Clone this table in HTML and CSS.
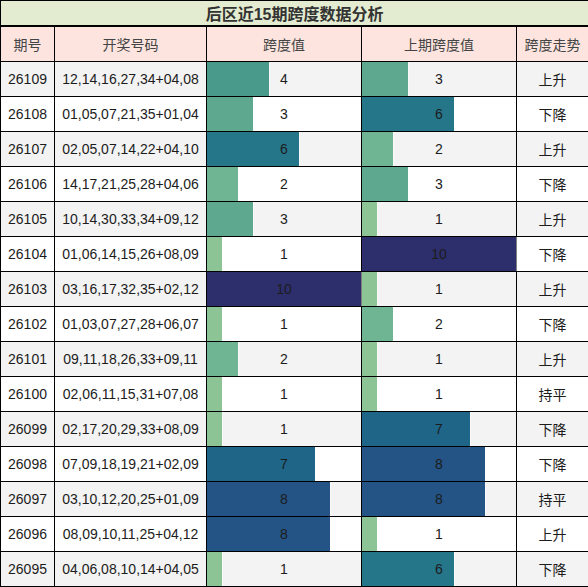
FILE: index.html
```html
<!DOCTYPE html>
<html lang="zh">
<head>
  <meta charset="utf-8" />
  <title>后区近15期跨度数据分析</title>
  <link rel="stylesheet" href="styles.css">
</head>
<body>
<table class="kd-table">
  <colgroup>
    <col class="kd-col--qh" />
    <col class="kd-col--hm" />
    <col class="kd-col--kd" />
    <col class="kd-col--kd" />
    <col class="kd-col--zs" />
  </colgroup>
  <tr class="kd-title"><td colspan="5">后区近15期跨度数据分析</td></tr>
  <tr class="kd-head">
    <td>期号</td><td>开奖号码</td><td>跨度值</td><td>上期跨度值</td><td>跨度走势</td>
  </tr>
  <tr class="kd-row">
    <td>26109</td><td>12,14,16,27,34+04,08</td>
    <td class="kd-cell"><div class="kd-meter"><div class="kd-bar kd-bar--4" style="width:40%"></div><span class="kd-num">4</span></div></td>
    <td class="kd-cell"><div class="kd-meter"><div class="kd-bar kd-bar--3" style="width:30%"></div><span class="kd-num">3</span></div></td>
    <td>上升</td>
  </tr>
  <tr class="kd-row">
    <td>26108</td><td>01,05,07,21,35+01,04</td>
    <td class="kd-cell"><div class="kd-meter"><div class="kd-bar kd-bar--3" style="width:30%"></div><span class="kd-num">3</span></div></td>
    <td class="kd-cell"><div class="kd-meter"><div class="kd-bar kd-bar--6" style="width:60%"></div><span class="kd-num">6</span></div></td>
    <td>下降</td>
  </tr>
  <tr class="kd-row">
    <td>26107</td><td>02,05,07,14,22+04,10</td>
    <td class="kd-cell"><div class="kd-meter"><div class="kd-bar kd-bar--6" style="width:60%"></div><span class="kd-num">6</span></div></td>
    <td class="kd-cell"><div class="kd-meter"><div class="kd-bar kd-bar--2" style="width:20%"></div><span class="kd-num">2</span></div></td>
    <td>上升</td>
  </tr>
  <tr class="kd-row">
    <td>26106</td><td>14,17,21,25,28+04,06</td>
    <td class="kd-cell"><div class="kd-meter"><div class="kd-bar kd-bar--2" style="width:20%"></div><span class="kd-num">2</span></div></td>
    <td class="kd-cell"><div class="kd-meter"><div class="kd-bar kd-bar--3" style="width:30%"></div><span class="kd-num">3</span></div></td>
    <td>下降</td>
  </tr>
  <tr class="kd-row">
    <td>26105</td><td>10,14,30,33,34+09,12</td>
    <td class="kd-cell"><div class="kd-meter"><div class="kd-bar kd-bar--3" style="width:30%"></div><span class="kd-num">3</span></div></td>
    <td class="kd-cell"><div class="kd-meter"><div class="kd-bar kd-bar--1" style="width:10%"></div><span class="kd-num">1</span></div></td>
    <td>上升</td>
  </tr>
  <tr class="kd-row">
    <td>26104</td><td>01,06,14,15,26+08,09</td>
    <td class="kd-cell"><div class="kd-meter"><div class="kd-bar kd-bar--1" style="width:10%"></div><span class="kd-num">1</span></div></td>
    <td class="kd-cell"><div class="kd-meter"><div class="kd-bar kd-bar--10" style="width:100%"></div><span class="kd-num">10</span></div></td>
    <td>下降</td>
  </tr>
  <tr class="kd-row">
    <td>26103</td><td>03,16,17,32,35+02,12</td>
    <td class="kd-cell"><div class="kd-meter"><div class="kd-bar kd-bar--10" style="width:100%"></div><span class="kd-num">10</span></div></td>
    <td class="kd-cell"><div class="kd-meter"><div class="kd-bar kd-bar--1" style="width:10%"></div><span class="kd-num">1</span></div></td>
    <td>上升</td>
  </tr>
  <tr class="kd-row">
    <td>26102</td><td>01,03,07,27,28+06,07</td>
    <td class="kd-cell"><div class="kd-meter"><div class="kd-bar kd-bar--1" style="width:10%"></div><span class="kd-num">1</span></div></td>
    <td class="kd-cell"><div class="kd-meter"><div class="kd-bar kd-bar--2" style="width:20%"></div><span class="kd-num">2</span></div></td>
    <td>下降</td>
  </tr>
  <tr class="kd-row">
    <td>26101</td><td>09,11,18,26,33+09,11</td>
    <td class="kd-cell"><div class="kd-meter"><div class="kd-bar kd-bar--2" style="width:20%"></div><span class="kd-num">2</span></div></td>
    <td class="kd-cell"><div class="kd-meter"><div class="kd-bar kd-bar--1" style="width:10%"></div><span class="kd-num">1</span></div></td>
    <td>上升</td>
  </tr>
  <tr class="kd-row">
    <td>26100</td><td>02,06,11,15,31+07,08</td>
    <td class="kd-cell"><div class="kd-meter"><div class="kd-bar kd-bar--1" style="width:10%"></div><span class="kd-num">1</span></div></td>
    <td class="kd-cell"><div class="kd-meter"><div class="kd-bar kd-bar--1" style="width:10%"></div><span class="kd-num">1</span></div></td>
    <td>持平</td>
  </tr>
  <tr class="kd-row">
    <td>26099</td><td>02,17,20,29,33+08,09</td>
    <td class="kd-cell"><div class="kd-meter"><div class="kd-bar kd-bar--1" style="width:10%"></div><span class="kd-num">1</span></div></td>
    <td class="kd-cell"><div class="kd-meter"><div class="kd-bar kd-bar--7" style="width:70%"></div><span class="kd-num">7</span></div></td>
    <td>下降</td>
  </tr>
  <tr class="kd-row">
    <td>26098</td><td>07,09,18,19,21+02,09</td>
    <td class="kd-cell"><div class="kd-meter"><div class="kd-bar kd-bar--7" style="width:70%"></div><span class="kd-num">7</span></div></td>
    <td class="kd-cell"><div class="kd-meter"><div class="kd-bar kd-bar--8" style="width:80%"></div><span class="kd-num">8</span></div></td>
    <td>下降</td>
  </tr>
  <tr class="kd-row">
    <td>26097</td><td>03,10,12,20,25+01,09</td>
    <td class="kd-cell"><div class="kd-meter"><div class="kd-bar kd-bar--8" style="width:80%"></div><span class="kd-num">8</span></div></td>
    <td class="kd-cell"><div class="kd-meter"><div class="kd-bar kd-bar--8" style="width:80%"></div><span class="kd-num">8</span></div></td>
    <td>持平</td>
  </tr>
  <tr class="kd-row">
    <td>26096</td><td>08,09,10,11,25+04,12</td>
    <td class="kd-cell"><div class="kd-meter"><div class="kd-bar kd-bar--8" style="width:80%"></div><span class="kd-num">8</span></div></td>
    <td class="kd-cell"><div class="kd-meter"><div class="kd-bar kd-bar--1" style="width:10%"></div><span class="kd-num">1</span></div></td>
    <td>上升</td>
  </tr>
  <tr class="kd-row">
    <td>26095</td><td>04,06,08,10,14+04,05</td>
    <td class="kd-cell"><div class="kd-meter"><div class="kd-bar kd-bar--1" style="width:10%"></div><span class="kd-num">1</span></div></td>
    <td class="kd-cell"><div class="kd-meter"><div class="kd-bar kd-bar--6" style="width:60%"></div><span class="kd-num">6</span></div></td>
    <td>下降</td>
  </tr>
</table>
</body>
</html>
```

FILE: styles.css
```css
:root {
  --line: #000;
  --title-bg: #e3ecd0;
  --head-bg: #fde4df;
  --odd: #f3f3f3;
  --even: #fff;
  --ink: #1c1c1c;
}
html, body {
  margin: 0;
  padding: 0;
  background: #fff;
}
.kd-table {
  width: 588px;
  table-layout: fixed;
  border-collapse: collapse;
  font-family: "Liberation Sans", "Noto Sans CJK SC", sans-serif;
  font-size: 14px;
  color: var(--ink);
  text-align: center;
}
.kd-col--qh { width: 54px; }
.kd-col--hm { width: 152px; }
.kd-col--kd { width: 155px; }
.kd-col--zs { width: 72px; }

.kd-table td {
  border: 1px solid var(--line);
  padding: 0;
  height: 34px;
}
.kd-title td {
  height: 24px;
  background: var(--title-bg);
  border-bottom: 2px solid var(--line);
  font-size: 16px;
  font-weight: bold;
  color: #333;
}
.kd-head td {
  background: var(--head-bg);
  color: #444;
}
.kd-row:nth-child(odd) td {
  background: var(--odd);
}
.kd-row:nth-child(even) td {
  background: var(--even);
}
.kd-meter {
  display: grid;
  height: 34px;
  align-items: center;
}
.kd-bar,
.kd-num {
  grid-area: 1 / 1;
}
.kd-bar {
  height: 100%;
  justify-self: start;
  box-shadow: 1px 0 0 rgba(255, 255, 255, 0.5);
}
.kd-num {
  position: relative;
}
.kd-bar--1 { background: #8cc496; }
.kd-bar--2 { background: #6fb593; }
.kd-bar--3 { background: #5ea88f; }
.kd-bar--4 { background: #4a9a8c; }
.kd-bar--6 { background: #26768a; }
.kd-bar--7 { background: #1f6588; }
.kd-bar--8 { background: #245485; }
.kd-bar--10 { background: #2d2f6d; }
```
